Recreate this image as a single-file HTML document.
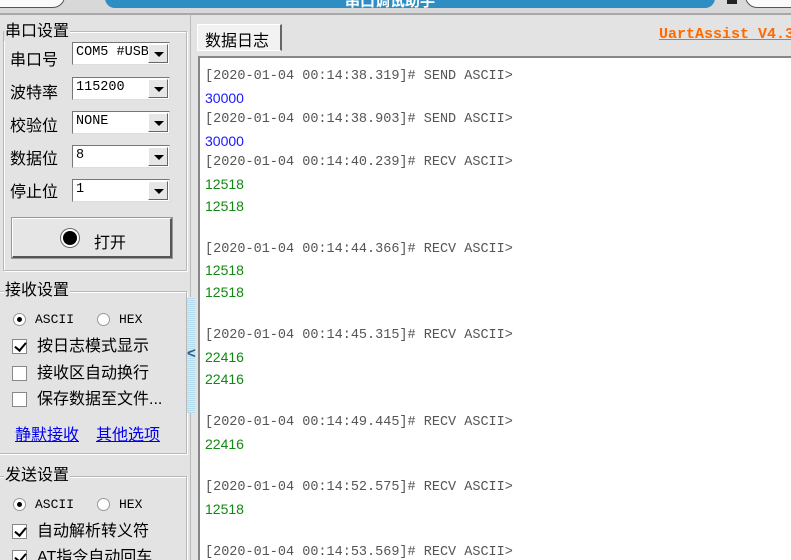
<!DOCTYPE html>
<html style="overflow:hidden;width:791px;height:560px"><head><meta charset="utf-8"><style>
*{margin:0;padding:0;box-sizing:border-box}
body{width:791px;height:560px;overflow:hidden;background:#e3e3e3;position:relative;font-family:"Liberation Sans","Noto Sans CJK SC",sans-serif;font-size:15px;color:#000}
.a{position:absolute}
.gb{position:absolute;border:1px solid #b8b8b8;box-shadow:1px 1px 0 #fff inset,1px 1px 0 #fff}
.gt{position:absolute;background:#e3e3e3;font-size:16px;padding:0 1px;line-height:18px}
.lbl{position:absolute;left:10px;font-size:16px;line-height:18px}
.cb{position:absolute;left:72px;width:98px;height:23px;background:#fff;border:1px solid #777;border-right-color:#ddd;border-bottom-color:#ddd;font-family:"Liberation Mono",monospace;font-size:13.5px;line-height:20px;padding-left:3px;overflow:hidden;white-space:nowrap}
.cb i{position:absolute;right:1px;top:1px;width:20px;height:19px;background:#e6e6e6;border:1px solid #fff;border-right-color:#666;border-bottom-color:#666}
.cb i:after{content:"";position:absolute;left:5px;top:7px;border-left:5px solid transparent;border-right:5px solid transparent;border-top:5px solid #000}
.rad{position:absolute;width:13px;height:13px;border-radius:50%;background:#fff;border:1px solid #999}
.rad.on:after{content:"";position:absolute;left:3px;top:3px;width:5px;height:5px;border-radius:50%;background:#000}
.chk{position:absolute;left:12px;width:15px;height:15px;background:#fff;border:1px solid #888}
.chk.on:after{content:"";position:absolute;left:4px;top:0px;width:5px;height:9px;border:solid #000;border-width:0 2px 2px 0;transform:rotate(40deg)}
.ct{position:absolute;left:37px;font-size:16px;line-height:18px}
.mono{font-family:"Liberation Mono",monospace;font-size:13px}
.log{position:absolute;left:198px;top:56px;width:593px;height:504px;background:#fff;border-left:2px solid #888;border-top:2px solid #888;overflow:hidden}
.ln{position:absolute;left:5px;font-family:"Liberation Mono",monospace;font-size:13.5px;color:#555;white-space:nowrap;line-height:16px}
.n{position:absolute;left:5px;font-size:14px;line-height:16px}
.b{color:#1818ff}.g{color:#118811}
</style></head><body>
<div class="a" style="left:0;top:0;width:791px;height:13px;background:#d8d8d8"></div>
<div class="a" style="left:-10px;top:-10px;width:75px;height:18px;background:#fafafa;border:1px solid #555;border-radius:0 0 12px 0"></div>
<div class="a" style="left:105px;top:-4px;width:610px;height:12px;background:#2e8ec4;border-radius:0 0 10px 10px;overflow:hidden"><div class="a" style="left:240px;top:-6px;color:#fff;font-weight:bold;font-size:15px;white-space:nowrap">串口调试助手</div></div>
<div class="a" style="left:727px;top:-6px;width:10px;height:10px;background:#222"></div>
<div class="a" style="left:745px;top:-10px;width:60px;height:18px;background:#fafafa;border:1px solid #555;border-radius:0 0 0 12px"></div>
<div class="a" style="left:0;top:13px;width:791px;height:2px;background:#a8a8a8"></div>

<div class="gb" style="left:3px;top:31px;width:184px;height:240px"></div>
<div class="gt" style="left:4px;top:23px">串口设置</div>
<div class="lbl" style="top:52px">串口号</div><div class="cb" style="top:42px">COM5 #USB<i></i></div>
<div class="lbl" style="top:85px">波特率</div><div class="cb" style="top:77px">115200<i></i></div>
<div class="lbl" style="top:118px">校验位</div><div class="cb" style="top:111px">NONE<i></i></div>
<div class="lbl" style="top:151px">数据位</div><div class="cb" style="top:145px">8<i></i></div>
<div class="lbl" style="top:184px">停止位</div><div class="cb" style="top:179px">1<i></i></div>
<div class="a" style="left:12px;top:218px;width:160px;height:40px;background:#e6e6e6;border:1px solid #fff;border-right:2px solid #555;border-bottom:2px solid #555;outline:1px solid #999"></div>
<div class="a" style="left:61px;top:229px;width:18px;height:18px;border-radius:50%;background:#000;border:2px solid #fff;box-shadow:0 0 0 1px #666"></div>
<div class="a" style="left:94px;top:229px;font-size:16px">打开</div>

<div class="gb" style="left:-2px;top:291px;width:189px;height:163px"></div>
<div class="gt" style="left:4px;top:282px">接收设置</div>
<div class="rad on" style="left:13px;top:313px"></div><div class="a mono" style="left:35px;top:312px">ASCII</div>
<div class="rad" style="left:97px;top:313px"></div><div class="a mono" style="left:119px;top:312px">HEX</div>
<div class="chk on" style="top:339px"></div><div class="ct" style="top:338px">按日志模式显示</div>
<div class="chk" style="top:366px"></div><div class="ct" style="top:365px">接收区自动换行</div>
<div class="chk" style="top:392px"></div><div class="ct" style="top:391px">保存数据至文件...</div>
<div class="a" style="left:15px;top:421px;color:#0000ee;text-decoration:underline;font-size:16px">静默接收</div>
<div class="a" style="left:96px;top:421px;color:#0000ee;text-decoration:underline;font-size:16px">其他选项</div>

<div class="gb" style="left:-2px;top:476px;width:189px;height:100px"></div>
<div class="gt" style="left:4px;top:467px">发送设置</div>
<div class="rad on" style="left:13px;top:498px"></div><div class="a mono" style="left:35px;top:497px">ASCII</div>
<div class="rad" style="left:97px;top:498px"></div><div class="a mono" style="left:119px;top:497px">HEX</div>
<div class="chk on" style="top:524px"></div><div class="ct" style="top:523px">自动解析转义符</div>
<div class="chk on" style="top:550px"></div><div class="ct" style="top:549px">AT指令自动回车</div>

<div class="a" style="left:190px;top:15px;width:1px;height:545px;background:#bbb"></div>
<div class="a" style="left:187px;top:297px;width:8px;height:116px;background:repeating-linear-gradient(0deg,#b5dcee 0 1px,#d4ecf7 1px 2px)"></div>
<div class="a" style="left:187px;top:345px;color:#2a5d80;font-weight:bold;font-size:15px">&lt;</div>

<div class="a" style="left:197px;top:24px;width:85px;height:27px;background:#f2f2f2;border:1px solid #fff;border-right:2px solid #666"></div>
<div class="a" style="left:205px;top:27px;font-size:16px">数据日志</div>
<div class="a" style="left:659px;top:26px;font-family:'Liberation Mono',monospace;font-weight:bold;font-size:15px;color:#ff6a00;text-decoration:underline;white-space:nowrap">UartAssist V4.3</div>

<div class="log">
<div class="ln" style="top:11px">[2020-01-04 00:14:38.319]# SEND ASCII&gt;</div>
<div class="n b" style="top:32px">30000</div>
<div class="ln" style="top:54px">[2020-01-04 00:14:38.903]# SEND ASCII&gt;</div>
<div class="n b" style="top:75px">30000</div>
<div class="ln" style="top:97px">[2020-01-04 00:14:40.239]# RECV ASCII&gt;</div>
<div class="n g" style="top:118px">12518</div>
<div class="n g" style="top:140px">12518</div>
<div class="ln" style="top:184px">[2020-01-04 00:14:44.366]# RECV ASCII&gt;</div>
<div class="n g" style="top:204px">12518</div>
<div class="n g" style="top:226px">12518</div>
<div class="ln" style="top:270px">[2020-01-04 00:14:45.315]# RECV ASCII&gt;</div>
<div class="n g" style="top:291px">22416</div>
<div class="n g" style="top:313px">22416</div>
<div class="ln" style="top:357px">[2020-01-04 00:14:49.445]# RECV ASCII&gt;</div>
<div class="n g" style="top:378px">22416</div>
<div class="ln" style="top:422px">[2020-01-04 00:14:52.575]# RECV ASCII&gt;</div>
<div class="n g" style="top:443px">12518</div>
<div class="ln" style="top:487px">[2020-01-04 00:14:53.569]# RECV ASCII&gt;</div>
</div>
</body></html>
